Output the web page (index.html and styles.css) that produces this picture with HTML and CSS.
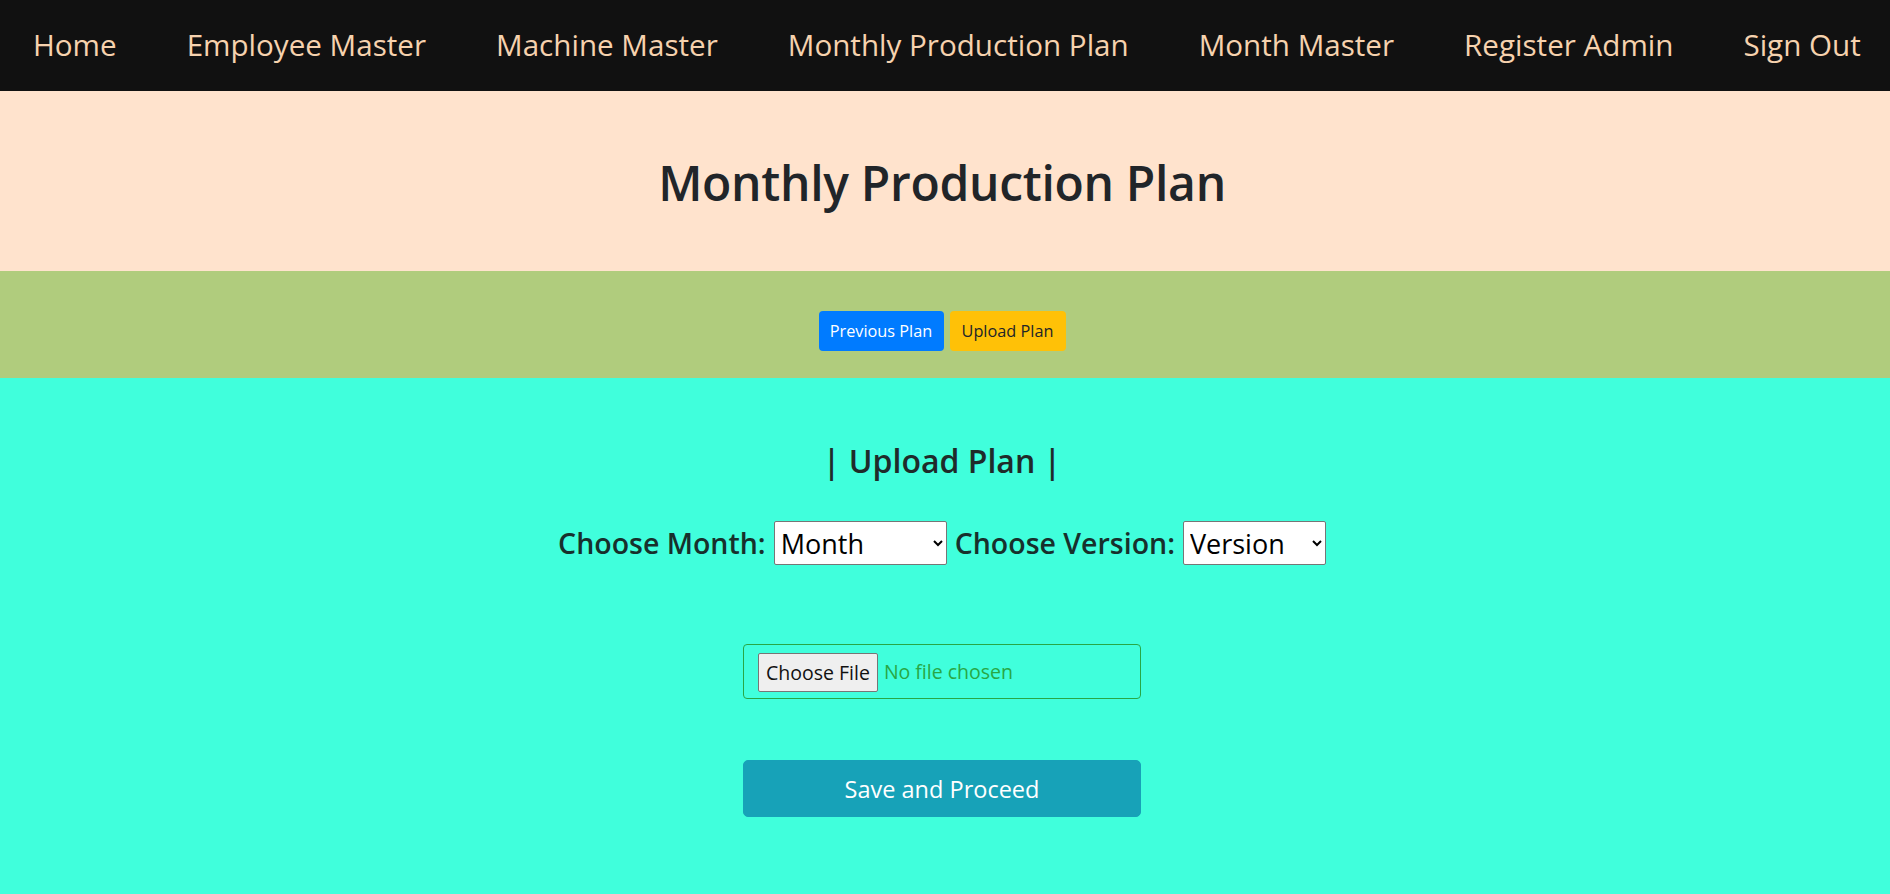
FILE: index.html
```html
<!DOCTYPE html>
<html lang="en">
<head>
<meta charset="utf-8">
<title>Monthly Production Plan</title>
<link rel="stylesheet" href="styles.css">
</head>
<body>
  <nav class="topnav">
    <a class="nav-link" href="#">Home</a>
    <a class="nav-link" href="#">Employee Master</a>
    <a class="nav-link" href="#">Machine Master</a>
    <a class="nav-link" href="#">Monthly Production Plan</a>
    <a class="nav-link" href="#">Month Master</a>
    <a class="nav-link" href="#">Register Admin</a>
    <a class="nav-link" href="#">Sign Out</a>
  </nav>

  <div class="page">
    <header class="hero">
      <h1 class="hero-title">Monthly Production Plan</h1>
    </header>

    <section class="actions">
      <button class="btn btn-primary" type="button">Previous Plan</button>
      <button class="btn btn-warning" type="button">Upload Plan</button>
    </section>

    <main class="upload">
      <h3 class="upload-title">| Upload Plan |</h3>
      <div class="choose-row">
        <label class="choose-label" for="month">Choose Month:</label>
        <select id="month" class="choose-select select-month">
          <option>Month</option>
        </select>
        <label class="choose-label" for="version">Choose Version:</label>
        <select id="version" class="choose-select select-version">
          <option>Version</option>
        </select>
      </div>
      <div class="file-box">
        <span class="file-btn">Choose File</span>
        <span class="file-text">No file chosen</span>
      </div>
      <button class="save-btn" type="button">Save and Proceed</button>
    </main>
  </div>
</body>
</html>
```

FILE: styles.css
```css
html, body {
  margin: 0;
  padding: 0;
}
body {
  font-family: "Open Sans", "Noto Sans", "Liberation Sans", sans-serif;
  color: #212529;
  background: #40ffdc;
  height: 894px;
  overflow: hidden;
}

.topnav {
  display: flex;
  align-items: center;
  height: 91px;
  background: #111111;
  white-space: nowrap;
  overflow: hidden;
}
.nav-link {
  padding: 0 35px;
  font-size: 29.6px;
  color: #f6d2ae;
  text-decoration: none;
  line-height: 1;
  padding-bottom: 2px;
}
.nav-link:first-child {
  padding-left: 33px;
}

.page > * {
  padding-right: 6px;
}

.hero {
  height: 180px;
  background: #ffe3cd;
  display: flex;
  align-items: center;
  justify-content: center;
}
.hero-title {
  margin: 0;
  padding-top: 4px;
  font-size: 48px;
  font-weight: 600;
  letter-spacing: -0.3px;
  line-height: 1.2;
  color: #212529;
}

.actions {
  height: 107px;
  box-sizing: border-box;
  background: #b0cc7d;
  display: flex;
  justify-content: center;
  align-items: flex-start;
  gap: 6px;
  padding-top: 40px;
}
.btn {
  font-family: inherit;
  font-size: 16.3px;
  line-height: 24px;
  padding: 7px 0;
  border: 1px solid transparent;
  border-radius: 4px;
  white-space: nowrap;
  text-align: center;
  cursor: pointer;
}
.btn-primary {
  background: #007bff;
  color: #ffffff;
  width: 125px;
}
.btn-warning {
  background: #ffc107;
  color: #212529;
  width: 116px;
}

.upload {
  display: flex;
  flex-direction: column;
  align-items: center;
  padding-top: 65px;
}
.upload-title {
  margin: 0;
  font-size: 32px;
  font-weight: 600;
  line-height: 36px;
  color: #1f2b2a;
}
.choose-row {
  margin-top: 42px;
  display: flex;
  align-items: center;
  gap: 8px;
}
.choose-label {
  font-size: 28.5px;
  font-weight: 600;
  color: #17302c;
}
.choose-select {
  height: 44px;
  font-family: inherit;
  font-size: 27px;
  color: #000;
  background: #ffffff;
  border: 1px solid #767676;
  border-radius: 2px;
  padding: 0 2px;
  box-sizing: border-box;
}
.select-month {
  width: 173px;
}
.select-version {
  width: 143px;
}

.file-box {
  margin-top: 79px;
  width: 398px;
  height: 55px;
  box-sizing: border-box;
  border: 1px solid #28a745;
  border-radius: 4px;
  display: flex;
  align-items: center;
  padding: 0 14px;
  gap: 6px;
}
.file-btn {
  font-size: 19.5px;
  line-height: 25px;
  color: #111;
  background: #efefef;
  border: 1px solid #767676;
  border-radius: 2px;
  padding: 6px 7px;
  margin-top: 1px;
}
.file-text {
  font-size: 19.5px;
  color: #28a745;
}

.save-btn {
  margin-top: 61px;
  width: 398px;
  height: 57px;
  background: #17a2b8;
  color: #ffffff;
  border: 1px solid #17a2b8;
  border-radius: 5px;
  font-family: inherit;
  font-size: 23.5px;
  cursor: pointer;
}
```
